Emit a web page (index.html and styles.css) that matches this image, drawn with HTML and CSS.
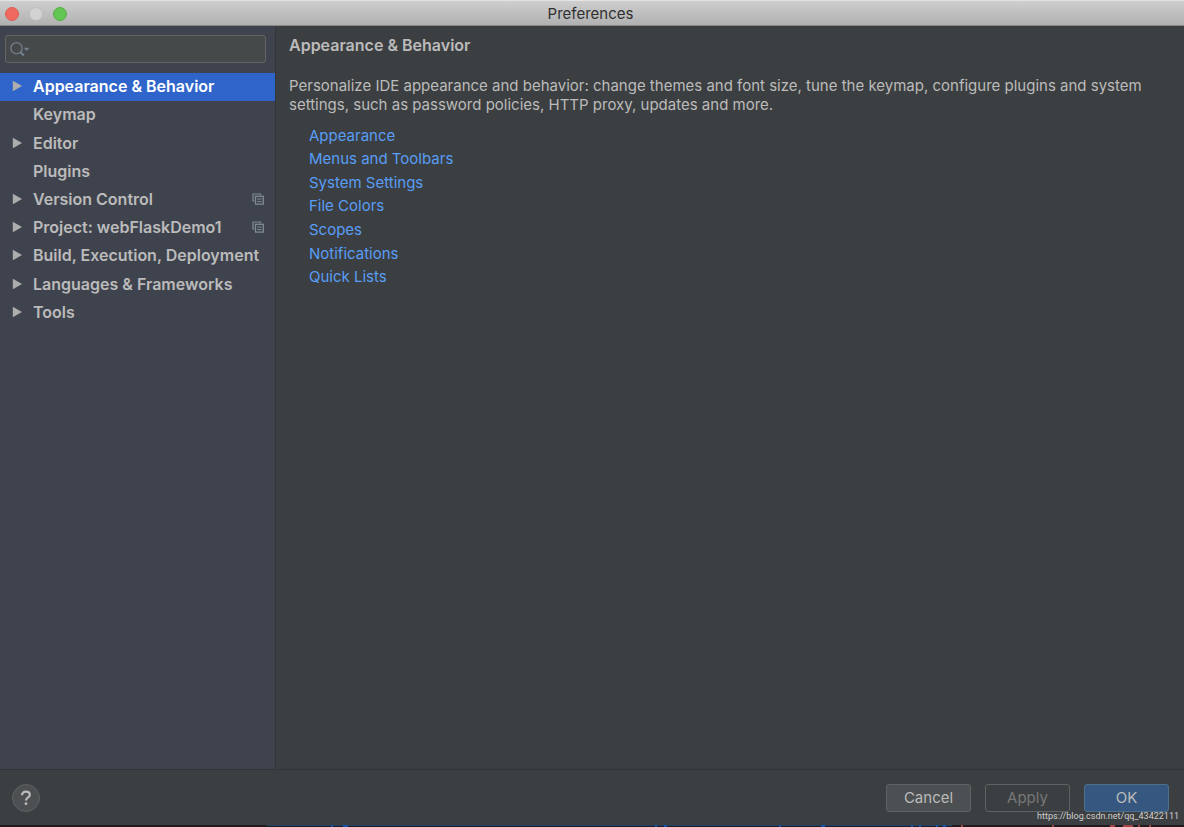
FILE: index.html
```
<!DOCTYPE html>
<html lang="en">
<head>
<meta charset="utf-8">
<title>Preferences</title>
<link rel="stylesheet" href="styles.css">
</head>
<body>
<svg class="defs" width="0" height="0" aria-hidden="true">
  <symbol id="arrow" viewBox="0 0 10 12"><path d="M0.8 0.7 10 6 0.8 11.3Z" fill="currentColor"/></symbol>
  <symbol id="copy" viewBox="0 0 12 12">
    <path d="M2.5 8H1V1H8.5V2.5" fill="none" stroke="currentColor" stroke-width="1.2"/>
    <rect x="3.5" y="3.3" width="7.8" height="7.8" fill="none" stroke="currentColor" stroke-width="1.3"/>
    <path d="M5.2 6H9.6M5.2 8.5H9.6" stroke="currentColor" stroke-width="1.2"/>
  </symbol>
</svg>
<div class="window">
  <header class="titlebar">
    <div class="lights">
      <button class="light close" aria-label="Close"></button>
      <button class="light minimize" aria-label="Minimize"></button>
      <button class="light zoom" aria-label="Zoom"></button>
    </div>
    <h1 class="title">Preferences</h1>
  </header>
  <div class="body">
    <aside class="sidebar">
      <label class="search">
        <svg class="search-icon" width="20" height="16" viewBox="0 0 20 16" aria-hidden="true">
          <circle cx="6.5" cy="7.2" r="5.6" fill="none" stroke="currentColor" stroke-width="1.3"/>
          <path d="M10.5 11.2 13.8 14.5" stroke="currentColor" stroke-width="2"/>
          <path d="M13.8 6.8H19.4L16.6 10Z" fill="currentColor"/>
        </svg>
        <input class="search-input" type="search" aria-label="Search settings">
      </label>
      <nav>
        <ul class="tree">
          <li class="row selected"><svg class="arrow"><use href="#arrow"/></svg><a class="name" href="#">Appearance &amp; Behavior</a></li>
          <li class="row"><span class="arrow"></span><a class="name" href="#">Keymap</a></li>
          <li class="row"><svg class="arrow"><use href="#arrow"/></svg><a class="name" href="#">Editor</a></li>
          <li class="row"><span class="arrow"></span><a class="name" href="#">Plugins</a></li>
          <li class="row"><svg class="arrow"><use href="#arrow"/></svg><a class="name" href="#">Version Control</a><svg class="copy"><use href="#copy"/></svg></li>
          <li class="row"><svg class="arrow"><use href="#arrow"/></svg><a class="name" href="#">Project: webFlaskDemo1</a><svg class="copy"><use href="#copy"/></svg></li>
          <li class="row"><svg class="arrow"><use href="#arrow"/></svg><a class="name" href="#">Build, Execution, Deployment</a></li>
          <li class="row"><svg class="arrow"><use href="#arrow"/></svg><a class="name" href="#">Languages &amp; Frameworks</a></li>
          <li class="row"><svg class="arrow"><use href="#arrow"/></svg><a class="name" href="#">Tools</a></li>
        </ul>
      </nav>
    </aside>
    <main class="content">
      <h2 class="heading">Appearance &amp; Behavior</h2>
      <p class="intro">Personalize IDE appearance and behavior: change themes and font size, tune the keymap, configure plugins and system settings, such as password policies, HTTP proxy, updates and more.</p>
      <ul class="links">
        <li><a href="#">Appearance</a></li>
        <li><a href="#">Menus and Toolbars</a></li>
        <li><a href="#">System Settings</a></li>
        <li><a href="#">File Colors</a></li>
        <li><a href="#">Scopes</a></li>
        <li><a href="#">Notifications</a></li>
        <li><a href="#">Quick Lists</a></li>
      </ul>
    </main>
  </div>
  <footer class="footer">
    <button class="help" aria-label="Help">
      <svg width="12" height="16" viewBox="0 0 12 16" aria-hidden="true">
        <path d="M2 5.2C2 2.8 3.7 1.7 5.9 1.7 8.2 1.7 9.8 3 9.8 4.9 9.8 7.5 6 7.5 6 10.5" fill="none" stroke="currentColor" stroke-width="2.2"/>
        <circle cx="6" cy="13.7" r="1.4" fill="currentColor"/>
      </svg>
    </button>
    <div class="actions">
      <button class="btn">Cancel</button>
      <button class="btn apply" disabled>Apply</button>
      <button class="btn ok">OK</button>
    </div>
  </footer>
  <svg class="backdrop" height="2" aria-hidden="true">
    <rect width="100%" height="2" fill="#1e1c20"/>
    <rect x="267" width="685" height="1" fill="#244268"/>
    <path d="M331 1h2M343 1h5M655 1h2M664 1h3M779 1h2M821 1h4M911 1h2M919 1h2M936 1h2M943 1h3" stroke="#1754a8" stroke-width="2"/>
    <path d="M961 1h2M1052 1h2M1110 1h5M1123 1h10M1138 1h2M1149 1h2" stroke="#a04444" stroke-width="2"/>
  </svg>
  <span class="watermark">https://blog.csdn.net/qq_43422111</span>
</div>
</body>
</html>
```
FILE: styles.css
```
* { box-sizing: border-box; }
body {
  margin: 0;
  font-family: Inter, "Liberation Sans", sans-serif;
  font-size: 15px;
  line-height: 20px;
  color: #bbbbbb;
  background: #3c3f41;
}
button, input { font: inherit; color: inherit; }
ul { list-style: none; margin: 0; padding: 0; }
a { color: inherit; text-decoration: none; }
.defs { position: absolute; }
.window { position: relative; display: flex; flex-direction: column; min-height: 100vh; }

.titlebar {
  display: grid;
  grid-template-columns: 1fr auto 1fr;
  align-items: center;
  height: 26px;
  padding: 1px 8px 0 5px;
  background: linear-gradient(#cecece, #b1b1b1);
  border-top: 1px solid #e4e4e4;
  border-bottom: 1px solid #858585;
}
.lights { display: flex; gap: 10px; }
.light { width: 14px; height: 14px; padding: 0; border: 1px solid; border-radius: 50%; }
.close { background: #f0695e; border-color: #db6056; }
.minimize { background: #d2d2d2; border-color: #bdbdbd; }
.zoom { background: #62c554; border-color: #58ae49; }
.title { margin: 0; font-size: 15px; font-weight: 400; color: #303030; }

.body { flex: 1; display: flex; }
.sidebar { flex: none; width: 276px; background: #3f434d; border-right: 1px solid #333638; }
.search {
  display: flex;
  align-items: center;
  height: 28px;
  margin: 9px 9px 10px 5px;
  padding: 0 4px;
  background: #45494a;
  border: 1px solid #646464;
  border-radius: 3px;
}
.search-icon { flex: none; color: #72808c; }
.search-input { flex: 1; min-width: 0; background: none; border: 0; outline: 0; }
.tree { display: grid; grid-auto-rows: 1fr; min-height: 254px; }
.row { display: flex; align-items: center; padding: 0 11px 2px 12px; font-size: 16px; font-weight: 600; }
.selected { background: #2f65ca; }
.selected .name { color: #ffffff; }
.arrow { flex: none; width: 10px; height: 12px; margin-right: 11px; color: #adadad; }
.name { flex: 1; white-space: nowrap; }
.copy { flex: none; width: 12px; height: 12px; color: #7f8b94; }

.content { flex: 1; padding: 9px 13px; }
.heading { margin: 0 0 21px; font-size: 16px; font-weight: 600; }
.intro { margin: 0 0 10px; line-height: 19px; }
.links { display: grid; grid-auto-rows: 1fr; align-items: center; min-height: 165px; padding-left: 20px; color: #589df6; }

.footer {
  display: flex;
  align-items: center;
  justify-content: space-between;
  height: 56px;
  padding: 0 15px 0 12px;
  border-top: 1px solid #333638;
}
.help {
  display: grid;
  place-items: center;
  width: 28px;
  height: 28px;
  padding: 0;
  color: #bbbbbb;
  background: #4c5052;
  border: 1px solid #5f6263;
  border-radius: 50%;
}
.actions { display: flex; gap: 14px; }
.btn {
  width: 85px;
  height: 28px;
  padding: 0;
  background: #4c5052;
  border: 1px solid #5f6263;
  border-radius: 3px;
}
.apply { color: #777777; background: #3c3f41; }
.ok { background: #365880; border-color: #4c708c; }
.backdrop { display: block; width: 100%; }
.watermark {
  position: absolute;
  right: 5px;
  bottom: 5px;
  font-family: Roboto, "Liberation Sans", sans-serif;
  font-size: 9px;
  line-height: 12px;
  color: #d0d0d0;
}
```
